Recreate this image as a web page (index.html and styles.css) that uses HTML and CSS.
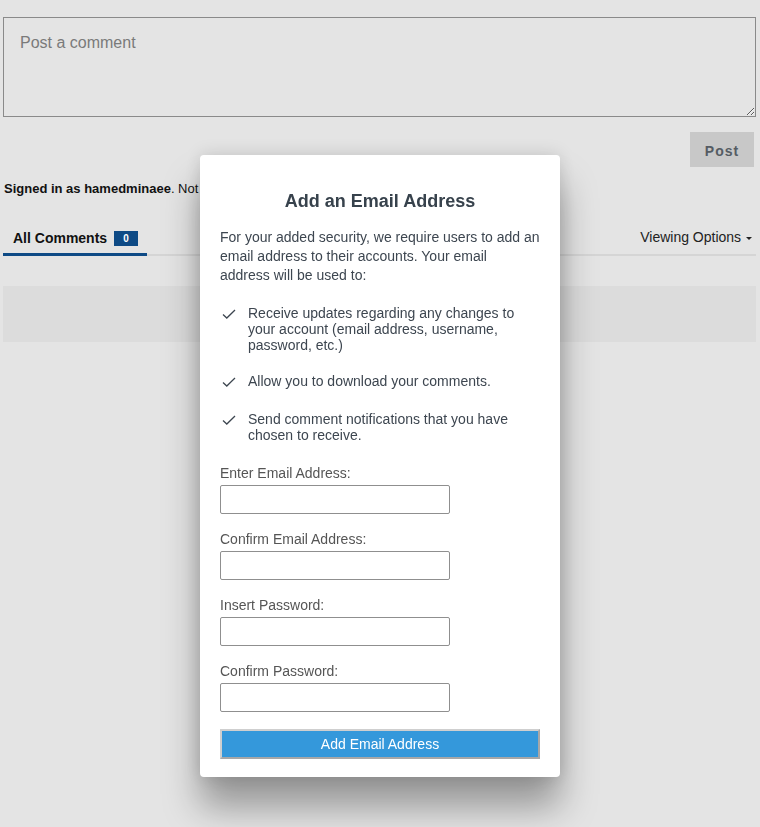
FILE: index.html
```html
<!DOCTYPE html>
<html lang="en">
  <head>
    <meta charset="UTF-8" />
    <meta name="viewport" content="width=device-width, initial-scale=1.0" />
    <title>Comments</title>
    <link rel="stylesheet" href="styles.css">
  </head>
  <body>
    <div class="page">
      <!-- Comment box -->
      <textarea class="comment-box" placeholder="Post a comment"></textarea>
      <div class="post-row">
        <button class="post-btn">Post</button>
      </div>
      <p class="signed-in"><strong>Signed in as hamedminaee</strong>. Not you? Sign out</p>

      <!-- Tabs -->
      <div class="tabs">
        <div class="tab active">All Comments <span class="badge">0</span></div>
        <div class="viewing">Viewing Options <span class="caret"></span></div>
      </div>
      <div class="empty-box"></div>
    </div>

    <!-- Modal -->
    <div class="modal">
      <h2>Add an Email Address</h2>
      <p class="intro">
        For your added security, we require users to add an email address to
        their accounts. Your email address will be used to:
      </p>
      <ul class="reasons">
        <li>
          <svg class="check" width="14" height="10" viewBox="0 0 14 10"><path d="M1 5.5 L4.8 9 L13 1" fill="none" stroke="#3d4650" stroke-width="1.3"/></svg>
          <span>Receive updates regarding any changes to your account (email address, username, password, etc.)</span>
        </li>
        <li>
          <svg class="check" width="14" height="10" viewBox="0 0 14 10"><path d="M1 5.5 L4.8 9 L13 1" fill="none" stroke="#3d4650" stroke-width="1.3"/></svg>
          <span>Allow you to download your comments.</span>
        </li>
        <li>
          <svg class="check" width="14" height="10" viewBox="0 0 14 10"><path d="M1 5.5 L4.8 9 L13 1" fill="none" stroke="#3d4650" stroke-width="1.3"/></svg>
          <span>Send comment notifications that you have chosen to receive.</span>
        </li>
      </ul>
      <div class="field">
        <label>Enter Email Address:</label>
        <input type="text" autofocus />
      </div>
      <div class="field">
        <label>Confirm Email Address:</label>
        <input type="text" />
      </div>
      <div class="field">
        <label>Insert Password:</label>
        <input type="password" />
      </div>
      <div class="field">
        <label>Confirm Password:</label>
        <input type="password" />
      </div>
      <button class="add-btn">Add Email Address</button>
    </div>
  </body>
</html>
```

FILE: styles.css
```css
* {
  margin: 0;
  padding: 0;
  box-sizing: border-box;
  font-family: "Liberation Sans", Arial, sans-serif;
}

body {
  background-color: #e4e4e4;
  overflow: hidden;
  height: 827px;
}

.page {
  padding: 17px 4px 0 3px;
}

.comment-box {
  display: block;
  width: 100%;
  height: 100px;
  padding: 16px 16px;
  background: #e4e4e4;
  border: 1px solid #8a8a8a;
  font-size: 16px;
  color: #333;
}

.comment-box::placeholder {
  color: #7a7a7a;
}

.post-row {
  display: flex;
  justify-content: flex-end;
  margin-top: 15px;
}

.post-btn {
  width: 64px;
  height: 35px;
  margin-right: 2px;
  padding-top: 2px;
  border: none;
  background-color: #c8c8c8;
  color: #555c63;
  font-size: 14px;
  font-weight: bold;
  letter-spacing: 1px;
}

.signed-in {
  margin-top: 14px;
  padding-left: 1px;
  font-size: 13px;
  color: #111;
  white-space: nowrap;
}

.tabs {
  display: flex;
  justify-content: space-between;
  align-items: flex-end;
  margin-top: 33px;
  border-bottom: 2px solid #d5d5d5;
}

.tab {
  display: flex;
  align-items: center;
  gap: 7px;
  width: 144px;
  padding: 0 0 7px 10px;
  font-size: 14px;
  font-weight: bold;
  color: #111;
  border-bottom: 3px solid #0e4a85;
  margin-bottom: -2px;
}

.badge {
  display: inline-block;
  width: 24px;
  height: 15px;
  line-height: 15px;
  background-color: #0e4a85;
  color: #fff;
  font-size: 10px;
  text-align: center;
}

.viewing {
  padding: 0 4px 9px 0;
  font-size: 14px;
  color: #222;
}

.caret {
  display: inline-block;
  vertical-align: middle;
  border-left: 3.5px solid transparent;
  border-right: 3.5px solid transparent;
  border-top: 3.5px solid #222;
  margin-left: 1px;
}

.empty-box {
  margin-top: 30px;
  height: 56px;
  background-color: #dcdcdc;
}

/* Modal */
.modal {
  position: fixed;
  top: 155px;
  left: 200px;
  width: 360px;
  height: 622px;
  padding: 36px 20px 0 20px;
  background-color: #fff;
  border-radius: 4px;
  box-shadow: 0 30px 36px rgba(0, 0, 0, 0.34), 0 0 18px rgba(0, 0, 0, 0.14);
  color: #3d4650;
}

.modal h2 {
  text-align: center;
  font-size: 18px;
  color: #37424c;
  margin-bottom: 16px;
}

.intro {
  font-size: 14px;
  line-height: 19px;
  color: #3d4650;
}

.reasons {
  list-style: none;
  margin-top: 20px;
}

.reasons li {
  display: flex;
  align-items: flex-start;
  gap: 12px;
  font-size: 14px;
  line-height: 16px;
  color: #3d4650;
  margin-bottom: 22px;
}

.reasons li:first-child {
  margin-bottom: 20px;
}

.check {
  flex: none;
  margin: 4px 0 0 2px;
}

.field {
  display: flex;
  flex-direction: column;
  margin-bottom: 17px;
}

.field label {
  font-size: 14px;
  line-height: 16px;
  color: #555;
  margin-bottom: 4px;
}

.field input {
  width: 230px;
  height: 29px;
  padding: 0 6px;
  border: 1px solid #8f8f8f;
  border-radius: 2px;
  font-size: 14px;
  outline: none;
}

.add-btn {
  display: block;
  width: 320px;
  height: 30px;
  margin-top: 0;
  background-color: #3498db;
  border: 2px solid #a7a7a7;
  border-top-color: #cfcfcf;
  border-left-color: #cfcfcf;
  color: #fff;
  font-size: 14px;
}
```
